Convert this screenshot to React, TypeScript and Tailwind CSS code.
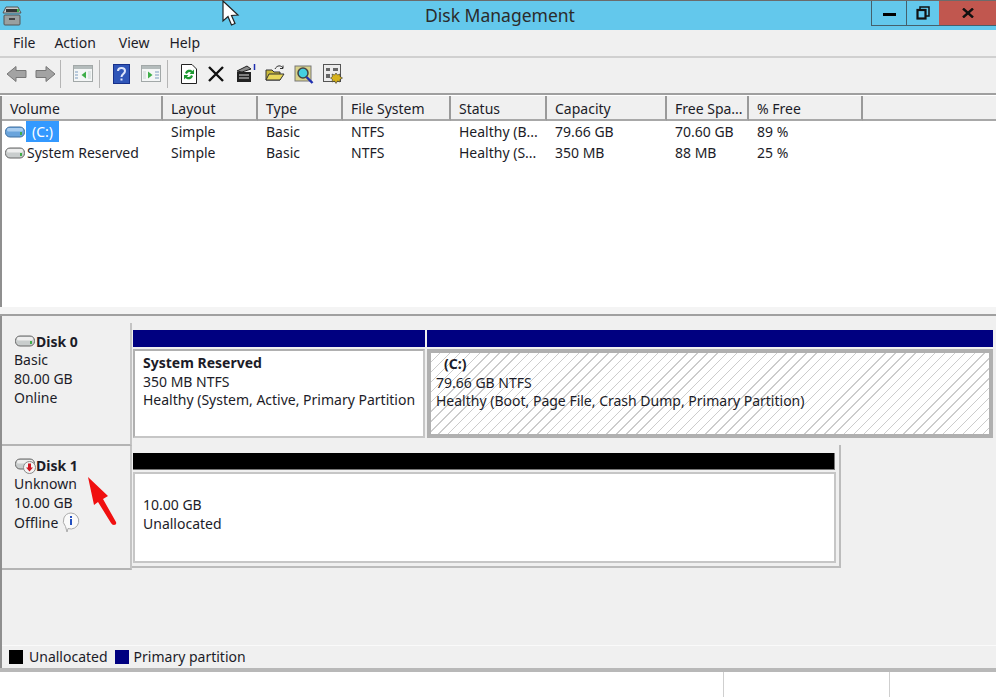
const font = "font-['Noto_Sans','Open_Sans',sans-serif]";

const columns = [
  { label: 'Volume', width: 'w-[161px]' },
  { label: 'Layout', width: 'w-[95px]' },
  { label: 'Type', width: 'w-[85px]' },
  { label: 'File System', width: 'w-[108px]' },
  { label: 'Status', width: 'w-[96px]' },
  { label: 'Capacity', width: 'w-[120px]' },
  { label: 'Free Spa...', width: 'w-[82px]' },
  { label: '% Free', width: 'w-[114px]' },
];

const rows = [
  { name: '(C:)', selected: true, cells: ['Simple', 'Basic', 'NTFS', 'Healthy (B...', '79.66 GB', '70.60 GB', '89 %'] },
  { name: 'System Reserved', selected: false, cells: ['Simple', 'Basic', 'NTFS', 'Healthy (S...', '350 MB', '88 MB', '25 %'] },
];

function DriveIcon({ blue = false, className = '' }: { blue?: boolean; className?: string }) {
  return (
    <svg width="20" height="12" viewBox="0 0 20 12" className={className}>
      <rect x="0.5" y="1" width="19" height="10" rx="4.5" fill={blue ? '#6aa4dc' : '#c9cdcd'} stroke={blue ? '#3f6f9f' : '#666'} />
      <rect x="2" y="2" width="16" height="3.5" rx="1.5" fill={blue ? '#a9cdf0' : '#eeeeee'} />
      <rect x="15" y="6" width="2" height="3" fill="#3fae49" />
    </svg>
  );
}

function ArrowIcon({ flip = false }: { flip?: boolean }) {
  return (
    <svg width="21" height="18" viewBox="0 0 21 18" className={flip ? '-scale-x-100' : ''}>
      <path d="M1 9 L10 1.5 V5.5 H20 V12.5 H10 V16.5 Z" fill="#a3a3a3" stroke="#777" />
    </svg>
  );
}

function PaneIcon({ side }: { side: 'left' | 'right' }) {
  return (
    <svg width="20" height="17" viewBox="0 0 20 17">
      <rect x="0.5" y="0.5" width="19" height="16" fill="#f4f6f6" stroke="#a2a8a8" />
      <rect x="1" y="1" width="18" height="3" fill="#b4bcbc" />
      {side === 'left' ? (
        <>
          <path d="M2 7h3M2 10h3M2 13h3" stroke="#7c9cc0" />
          <path d="M13 6.5 V13.5 L8.5 10 Z" fill="#3fae49" />
          <path d="M15 6h3v8h-3" fill="#dfe5e5" />
        </>
      ) : (
        <>
          <path d="M2 6h3v8H2" fill="#dfe5e5" />
          <path d="M7 6.5 V13.5 L11.5 10 Z" fill="#3fae49" />
          <path d="M14 7h4M14 10h4M14 13h4" stroke="#7c9cc0" />
        </>
      )}
    </svg>
  );
}

function Toolbar() {
  return (
    <div className="flex h-[37px] shrink-0 items-center border-b-2 border-[#9f9f9f] bg-[#f0f0f0] pb-[4px] pl-[6px]">
      <div className="flex w-[54px] gap-[8px]">
        <ArrowIcon />
        <ArrowIcon flip />
      </div>
      <div className="h-[28px] w-px bg-[#b5b5b5]" />
      <div className="ml-[12px] w-[20px]">
        <PaneIcon side="left" />
      </div>
      <div className="ml-[6px] h-[28px] w-px bg-[#b5b5b5]" />
      <svg width="17" height="20" viewBox="0 0 17 20" className="ml-[13px]">
        <rect width="17" height="20" fill="#2f55b8" />
        <rect x="0.5" y="0.5" width="16" height="19" fill="none" stroke="#17308a" />
        <path d="M5 7 C5 3 12 3 12 7 C12 10 8.5 10 8.5 13" fill="none" stroke="#dfe6fb" strokeWidth="2" />
        <rect x="7.5" y="14.5" width="2" height="2" fill="#dfe6fb" />
      </svg>
      <div className="ml-[11px]">
        <PaneIcon side="right" />
      </div>
      <div className="ml-[6px] h-[28px] w-px bg-[#b5b5b5]" />
      <svg width="16" height="20" viewBox="0 0 16 20" className="ml-[13px]">
        <path d="M0.5 0.5 H11 L15.5 5 V19.5 H0.5 Z" fill="#fff" stroke="#222" />
        <path d="M4 9 A4.5 4.5 0 0 1 11.5 7 L13 5.5 V10 H8.5 L10 8.5 A2.5 2.5 0 0 0 6 10 Z" fill="#1f9a33" />
        <path d="M12 12 A4.5 4.5 0 0 1 4.5 14 L3 15.5 V11 H7.5 L6 12.5 A2.5 2.5 0 0 0 10 11 Z" fill="#1f9a33" />
      </svg>
      <svg width="18" height="18" viewBox="0 0 18 18" className="ml-[10px]">
        <path d="M2 2 L16 16 M16 2 L2 16" stroke="#111" strokeWidth="2.4" />
      </svg>
      <svg width="20" height="19" viewBox="0 0 20 19" className="ml-[11px]">
        <rect x="1" y="8" width="14" height="10" fill="#222" />
        <path d="M3 11h10M3 14h10" stroke="#ddd" />
        <path d="M1 7 L11 2 L15 5 L6 8 Z" fill="#8a8a8a" stroke="#222" />
        <path d="M18.5 0 V6" stroke="#1f2fb0" strokeWidth="1.5" />
      </svg>
      <svg width="20" height="17" viewBox="0 0 20 17" className="ml-[9px]">
        <path d="M1 5 H7 L9 7 H15 V15 H1 Z" fill="#c9b93a" stroke="#333" />
        <path d="M1 15 L4 9 H19 L15 15 Z" fill="#e8d85a" stroke="#333" />
        <path d="M10 4 C12 0 16 0 18 3 M18 0.5 V3.5 H15" fill="none" stroke="#333" />
      </svg>
      <svg width="20" height="21" viewBox="0 0 20 21" className="ml-[9px]">
        <rect x="1" y="3" width="16" height="15" fill="#d9d28a" stroke="#777" />
        <circle cx="9" cy="10" r="5" fill="#45cfe0" stroke="#444" strokeWidth="1.5" />
        <path d="M12.5 14 L18.5 20" stroke="#1f2fb0" strokeWidth="2.4" />
      </svg>
      <svg width="20" height="20" viewBox="0 0 20 20" className="ml-[9px]">
        <rect x="0.5" y="0.5" width="17" height="17" fill="#ececec" stroke="#555" />
        <path d="M3 4h4v3H3zM10 4h5v3h-5zM3 10h4v4H3z" fill="#666" />
        <path d="M13 9 L14.5 11 L17 10 L17 12.5 L19.5 14 L17 15.5 L17 18 L14.5 17 L13 19.5 L11.5 17 L9 18 L9.5 15.5 L7.5 14 L9.5 12.5 L9 10 L11.5 11 Z" fill="#d6b21c" stroke="#333" strokeWidth="0.6" />
      </svg>
    </div>
  );
}

function VolumeList() {
  return (
    <div className="flex h-[211px] shrink-0 flex-col bg-white">
      <div className="flex h-[25px] border-l-2 border-[#8f8f8f] bg-[#f0f0f0]">
        {columns.map((col) => (
          <div key={col.label} className={`${col.width} flex items-center border-r-2 border-b-2 border-r-[#9a9a9a] border-b-[#a8a8a8] pl-[8px] pt-[2px]`}>
            {col.label}
          </div>
        ))}
        <div className="flex-1 border-b-2 border-[#a8a8a8]" />
      </div>
      <div className="flex-1 border-l-2 border-[#8f8f8f]">
        {rows.map((row) => (
          <div key={row.name} className="flex h-[21px] items-center">
            <div className="flex w-[161px] items-center pl-[3px]">
              <DriveIcon blue={row.selected} />
              {row.selected ? (
                <span className="ml-[1px] bg-[#3399ff] px-[6px] text-white leading-[21px]">{row.name}</span>
              ) : (
                <span className="ml-[2px]">{row.name}</span>
              )}
            </div>
            {row.cells.map((cell, i) => (
              <div key={i} className={`${columns[i + 1].width} pl-[8px]`}>
                {cell}
              </div>
            ))}
          </div>
        ))}
      </div>
    </div>
  );
}

function DiskLabel({ title, lines, icon, className }: { title: string; lines: string[]; icon: React.ReactNode; className: string }) {
  return (
    <div className={`${className} flex w-[130px] shrink-0 flex-col border-r-2 border-b-2 border-r-[#c4c4c4] border-b-[#b4b4b4] pl-[12px] leading-[19px]`}>
      <div className="flex h-[18px] items-center font-bold">
        {icon}
        <span className="ml-px">{title}</span>
      </div>
      {lines.map((line) => (
        <div key={line} className="flex items-center">
          {line}
          {line === 'Offline' && title === 'Disk 1' && (
            <svg width="20" height="21" viewBox="0 0 20 21" className="ml-[3px]">
              <path d="M10 1 A8 8 0 1 1 7 16.5 L6 20 L4.5 14.5 A8 8 0 0 1 10 1 Z" fill="#fafafa" stroke="#aaa" />
              <rect x="9" y="4" width="2" height="2" fill="#2450c0" />
              <rect x="9" y="7" width="2" height="6" fill="#2450c0" />
            </svg>
          )}
        </div>
      ))}
    </div>
  );
}

function DiskGraph() {
  return (
    <div className="flex flex-1 flex-col border-l-2 border-[#8f8f8f] bg-[#f0f0f0]">
      <div className="flex-1 pt-[7px]">
        {/* Disk 0 */}
        <div className="flex">
          <DiskLabel
            title="Disk 0"
            lines={['Basic', '80.00 GB', 'Online']}
            icon={<DriveIcon className="ml-[1px]" />}
            className="h-[123px] pt-[9px]"
          />
          <div className="flex-1 pt-[7px] pr-[3px] pl-px">
            <div className="flex gap-[2px]">
              <div className="w-[292px]">
                <div className="h-[17px] bg-[#000080]" />
                <div className="mt-[2px] h-[89px] border-2 border-[#c6c6c6] border-t-[#b0b0b0] border-l-[#b0b0b0] bg-white pt-[3px] pl-[8px] leading-[18.6px]">
                  <div className="font-bold">System Reserved</div>
                  <div>350 MB NTFS</div>
                  <div className="overflow-hidden whitespace-nowrap">Healthy (System, Active, Primary Partition</div>
                </div>
              </div>
              <div className="flex-1">
                <div className="h-[17px] bg-[#000080]" />
                <div className="mt-[2px] h-[89px] border-[4px] border-[#b0b0b0] bg-white bg-[repeating-linear-gradient(135deg,#ffffff_0,#ffffff_6px,#cccccc_6px,#cccccc_7px)] pt-[2px] pl-[5px] leading-[18.6px]">
                  <div className="pl-[8px] font-bold">(C:)</div>
                  <div>79.66 GB NTFS</div>
                  <div className="whitespace-nowrap">Healthy (Boot, Page File, Crash Dump, Primary Partition)</div>
                </div>
              </div>
            </div>
          </div>
        </div>
        {/* Disk 1 */}
        <div className="flex">
          <DiskLabel
            title="Disk 1"
            lines={['Unknown', '10.00 GB', 'Offline']}
            icon={
              <span className="relative ml-[1px] block h-[14px] w-[20px]">
                <DriveIcon />
                <svg width="13" height="13" viewBox="0 0 13 13" className="absolute top-[3px] left-[8px]">
                  <circle cx="6.5" cy="6.5" r="6" fill="#f4f4f4" stroke="#888" />
                  <path d="M5 2.5h3v4h2L6.5 10.5 3 6.5h2z" fill="#d01622" />
                </svg>
              </span>
            }
            className="h-[124px] pt-[10px]"
          />
          <div className="-mt-px h-[123px] w-[709px] border-r-2 border-b-2 border-[#bcbcbc] pt-[8px] pl-px">
            <div className="mr-[4px] h-[17px] border-r border-b border-[#777] bg-black" />
            <div className="mt-[2px] mr-[3px] h-[91px] border-2 border-[#c6c6c6] bg-white pt-[21px] pl-[8px] leading-[19px]">
              <div>10.00 GB</div>
              <div>Unallocated</div>
            </div>
          </div>
        </div>
      </div>
      {/* Legend */}
      <div className="flex h-[23px] items-center border-t border-[#fafafa] pl-[7px]">
        <span className="h-[14px] w-[14px] bg-black" />
        <span className="ml-[6px]">Unallocated</span>
        <span className="ml-[7px] h-[14px] w-[14px] bg-[#000080]" />
        <span className="ml-[5px]">Primary partition</span>
      </div>
    </div>
  );
}

export default function App() {
  return (
    <div className={`${font} relative flex h-[697px] w-[996px] flex-col overflow-hidden bg-[#f0f0f0] text-[14px] leading-[20px] text-[#1c1c28]`}>
      {/* Title bar */}
      <div className="flex h-[30px] shrink-0 items-start border-t border-[#6b6b6b] bg-[#63c8ec]">
        <svg width="20" height="20" viewBox="0 0 20 20" className="mt-[5px] ml-[2px]">
          <path d="M4 1h12l3 6H1z" fill="#c8cccc" stroke="#555" />
          <rect x="4" y="3" width="12" height="3" fill="#333" />
          <rect x="15" y="3" width="2" height="3" fill="#3fae49" />
          <rect x="2" y="9" width="16" height="10" rx="1" fill="#9aa0a0" stroke="#555" />
          <rect x="7" y="12" width="6" height="2" fill="#444" />
        </svg>
        <div className="flex-1 pt-[3px] pl-[403px] text-[17.5px] leading-[22px] text-[#2b2b2b]">Disk Management</div>
        <div className="flex h-[25px] border-b border-l border-[#44606c]">
          <div className="flex w-[35px] items-center justify-center border-r border-[#44606c]">
            <span className="mt-[2px] h-[3px] w-[13px] bg-black" />
          </div>
          <div className="flex w-[32px] items-center justify-center">
            <svg width="14" height="14" viewBox="0 0 14 14">
              <path d="M4 3V1h9v9h-3" fill="none" stroke="#111" strokeWidth="1.5" />
              <rect x="1.5" y="4" width="8" height="8.5" fill="none" stroke="#111" strokeWidth="2.2" />
            </svg>
          </div>
          <div className="flex w-[57px] items-center justify-center bg-[#c1574f]">
            <svg width="12" height="10" viewBox="0 0 12 10">
              <path d="M1 0.5 L11 9.5 M11 0.5 L1 9.5" stroke="#111" strokeWidth="2.4" />
            </svg>
          </div>
        </div>
      </div>

      {/* Menu bar */}
      <div className="flex h-[28px] shrink-0 items-center gap-[19px] border-b-2 border-[#d0d0d0] pb-[1px] pl-[13px]">
        <span>File</span>
        <span>Action</span>
        <span className="ml-[4px]">View</span>
        <span className="ml-[1px]">Help</span>
      </div>

      <Toolbar />
      <div className="h-px shrink-0 bg-white" />
      <VolumeList />

      {/* Splitter */}
      <div className="h-[9px] shrink-0 border-b-2 border-[#a0a0a0] bg-[#f4f4f4]" />

      <DiskGraph />

      {/* Status bar */}
      <div className="flex h-[29px] shrink-0 border-t-[4px] border-[#b8b8b8] bg-white">
        <div className="w-[724px] border-r border-[#cfcfcf]" />
        <div className="w-[166px] border-r border-[#cfcfcf]" />
      </div>

      {/* Mouse pointer in the capture */}
      <svg width="18" height="28" viewBox="0 0 18 28" className="absolute top-0 left-[222px]">
        <path d="M1 1 V21 L6 16.5 L9.5 25 L13 23.5 L9.5 15.5 L16 15 Z" fill="#fff" stroke="#222" strokeWidth="1.2" />
      </svg>

      {/* Red annotation arrow */}
      <svg width="32" height="54" viewBox="0 0 32 54" className="absolute top-[476px] left-[87px]">
        <path d="M1 1 L21 20 L16 23 L29 46 Q30 49 27 49 Q25 49 24 47 L11 26 L7 29 Z" fill="#f01010" />
      </svg>
    </div>
  );
}
